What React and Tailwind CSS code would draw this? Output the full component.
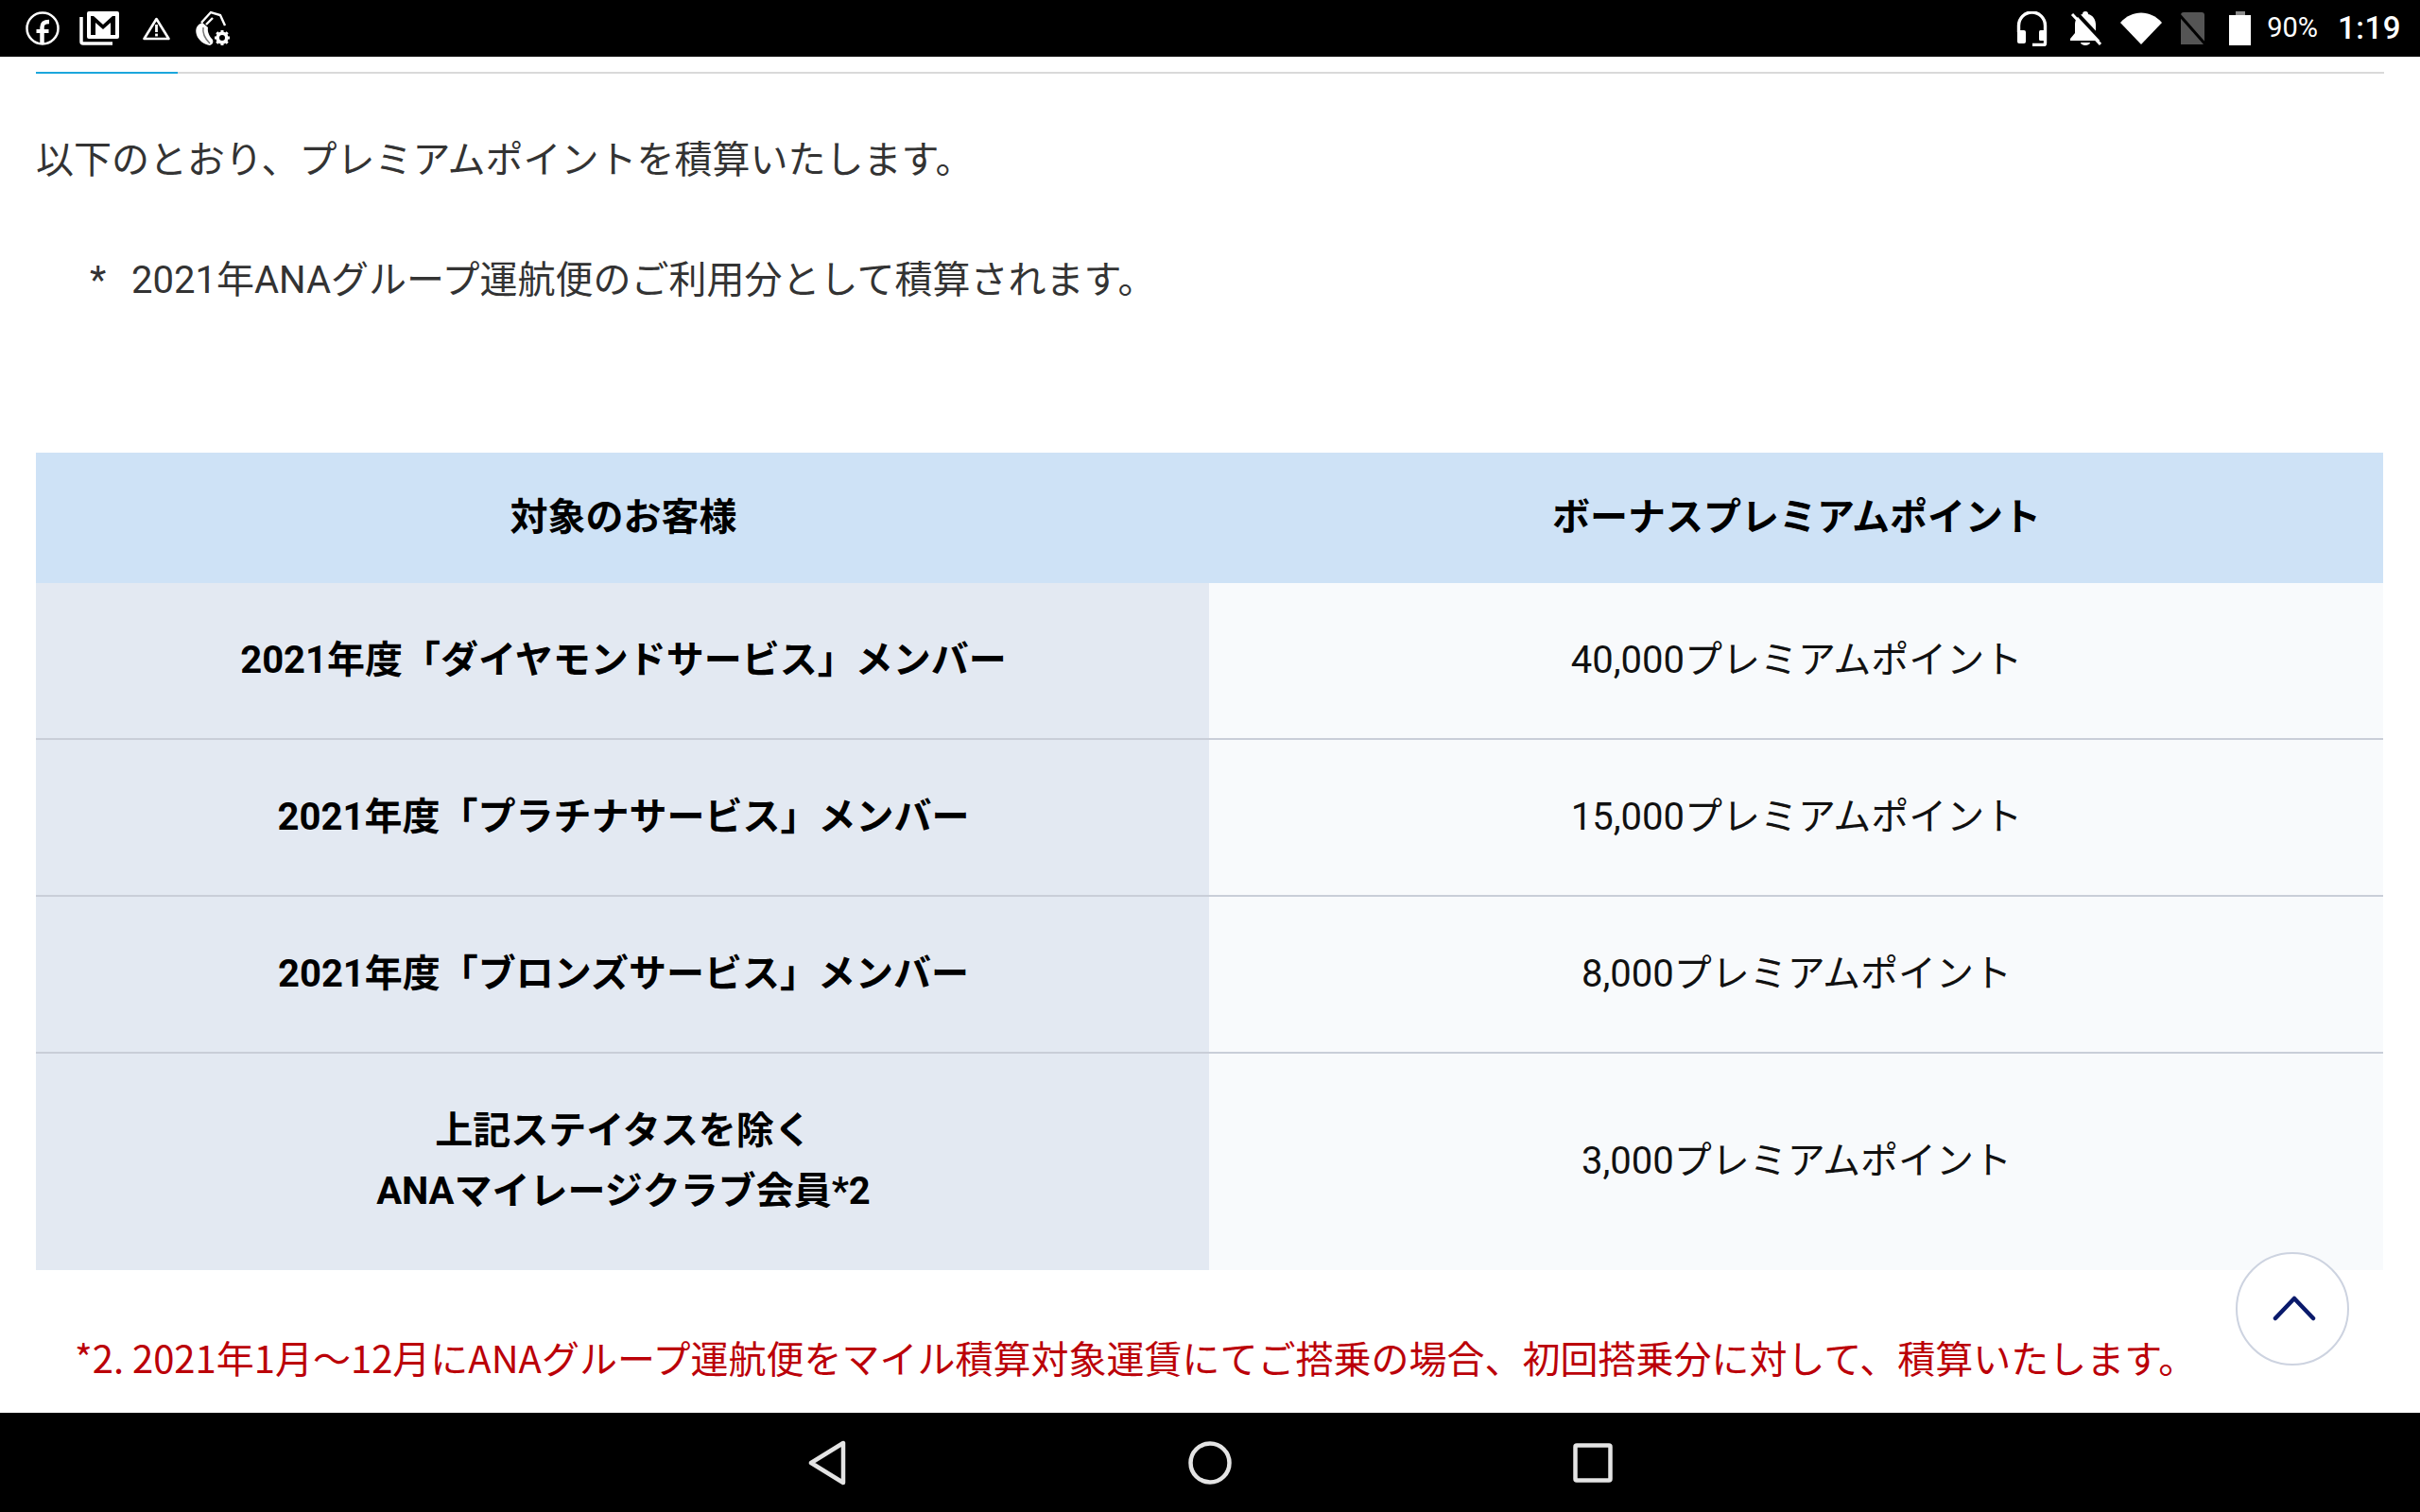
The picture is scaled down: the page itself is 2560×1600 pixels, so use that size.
const rows = [
  { name: ["2021年度「ダイヤモンドサービス」メンバー"], points: "40,000プレミアムポイント", height: "h-[166px]" },
  { name: ["2021年度「プラチナサービス」メンバー"], points: "15,000プレミアムポイント", height: "h-[166px]" },
  { name: ["2021年度「ブロンズサービス」メンバー"], points: "8,000プレミアムポイント", height: "h-[166px]" },
  { name: ["上記ステイタスを除く", "ANAマイレージクラブ会員*2"], points: "3,000プレミアムポイント", height: "h-[229px]", last: true },
];

function LeftIcons() {
  return (
    <div className="flex items-center">
      <svg width="36" height="36" viewBox="0 0 36 36" className="ml-[27px]" fill="none" stroke="white">
        <circle cx="18" cy="18" r="16.5" strokeWidth="2.5" />
        <path d="M17.500 35V17c0-4 2-6 7.500-6" strokeWidth="4.500" />
        <path d="M11.500 21h13" strokeWidth="4" />
      </svg>
      <svg width="42" height="36" viewBox="0 0 42 36" className="ml-[21px]" fill="none">
        <path d="M2 6v26a2 2 0 0 0 2 2h31" stroke="white" strokeWidth="3.500" />
        <rect x="8" y="0" width="34" height="29" rx="2" fill="white" />
        <path d="M12 25V5h3l10 9 10-9h3v20h-5V12l-8 7-8-7v13z" fill="black" />
      </svg>
      <svg width="31" height="26" viewBox="0 0 31 26" className="ml-[24px]" fill="none">
        <path d="M15.500 3 28.500 24h-26z" stroke="white" strokeWidth="2.600" strokeLinejoin="round" />
        <rect x="14.100" y="9" width="2.800" height="8" fill="white" />
        <rect x="14.100" y="18.600" width="2.800" height="2.800" fill="white" />
      </svg>
      <svg width="38" height="38" viewBox="0 0 38 38" className="ml-[25px]" fill="none">
        <path d="M7 13 17 2l10 3 5 11" stroke="white" strokeWidth="2.400" />
        <path d="M12 15 19 8" stroke="white" strokeWidth="2.400" />
        <path d="M8 13C2 15 0 20 2 26c2 6 8 10 14 11 3-1 4-3 3-6-3-3-6-8-5-13z" fill="white" />
        <path d="M9 18c-1 6 2 12 7 17" stroke="#777777" strokeWidth="1.500" />
        <circle cx="29" cy="29" r="4.800" stroke="white" strokeWidth="3.600" />
        <path d="M29 21v3M29 34v3M21 29h3M34 29h3M23.300 23.300l2 2M32.700 32.700l2 2M23.300 34.700l2-2M32.700 25.300l2-2" stroke="white" strokeWidth="3" />
      </svg>
    </div>
  );
}

function RightIcons() {
  return (
    <div className="flex items-center">
      <svg width="33" height="37" viewBox="0 0 33 37" fill="none">
        <path d="M2.500 22V15a14 14 0 0 1 28 0v19a1.500 1.500 0 0 1-1.500 1.500H17" stroke="white" strokeWidth="3.400" />
        <rect x="1" y="20" width="9" height="14" rx="2" fill="white" />
        <rect x="24" y="20" width="8" height="11" rx="1.500" fill="white" />
      </svg>
      <svg width="34" height="36" viewBox="0 0 34 36" className="ml-[23px]" fill="none">
        <path d="M17 0a3 3 0 0 1 3 3c5 1 8 6 8 11v9l5 6v2H1v-2l5-6V14c0-5 3-10 8-11a3 3 0 0 1 3-3z" fill="white" />
        <path d="M12 33h10a5 3 0 0 1-10 0z" fill="white" />
        <path d="M7 1 37 33" stroke="black" strokeWidth="4" />
        <path d="M3 3 33 35" stroke="white" strokeWidth="3" />
      </svg>
      <svg width="44" height="34" viewBox="0 0 44 34" className="ml-[20px]">
        <path d="M22 34 0 11C12-3 32-3 44 11z" fill="white" />
      </svg>
      <svg width="32" height="34" viewBox="0 0 32 34" className="ml-[16px]" fill="none">
        <path d="M4 3a3 3 0 0 1 3-3h19a3 3 0 0 1 3 3v31H4z" fill="#555555" />
        <path d="M1 1 30 34" stroke="black" strokeWidth="3" />
      </svg>
      <div className="ml-[23px] flex w-[23px] flex-col items-center">
        <div className="h-[4px] w-[10px] bg-[#8a8a8a]" />
        <div className="h-[32px] w-[23px] bg-white" />
      </div>
      <span className="ml-[17px] text-[29px] text-white">90%</span>
      <span className="ml-[21px] mr-[20px] text-[33px] font-medium tracking-[0.5px] text-white">1:19</span>
    </div>
  );
}

function BackToTop() {
  return (
    <div className="absolute left-[2365px] top-[1325px] flex h-[120px] w-[120px] items-center justify-center rounded-full border-2 border-[#cdd3e0] bg-white">
      <svg width="46" height="28" viewBox="0 0 46 28" fill="none" className="-mt-[2px] ml-[3px]">
        <path d="M3 25 23 4l20 21" stroke="#0a1a6b" strokeWidth="4.500" strokeLinecap="round" strokeLinejoin="round" />
      </svg>
    </div>
  );
}

function NavBar() {
  return (
    <div className="flex h-[105px] items-center justify-center bg-black">
      <svg width="40" height="48" viewBox="0 0 40 48" fill="none">
        <path d="M37 3v42L3 24z" stroke="#e4e4e4" strokeWidth="4.500" strokeLinejoin="round" />
      </svg>
      <svg width="46" height="46" viewBox="0 0 46 46" fill="none" className="ml-[362px]">
        <circle cx="23" cy="23" r="20.500" stroke="#e4e4e4" strokeWidth="4.500" />
      </svg>
      <svg width="42" height="42" viewBox="0 0 42 42" fill="none" className="ml-[361px]">
        <rect x="2.500" y="2.500" width="37" height="37" rx="1.500" stroke="#e4e4e4" strokeWidth="4.500" />
      </svg>
    </div>
  );
}

export default function App() {
  return (
    <div className="relative flex h-[1600px] w-[2560px] flex-col overflow-hidden bg-white font-['Roboto','Noto_Sans_CJK_JP',sans-serif] text-[40px] text-[#333333]">
      <div className="flex h-[60px] items-center justify-between bg-black">
        <LeftIcons />
        <RightIcons />
      </div>

      <div className="flex flex-1 flex-col px-[38px]">
        <div className="mt-[16px] h-[2px] w-[2484px] bg-[#d9d9d9]">
          <div className="h-[2px] w-[150px] bg-[#1ba6dc]" />
        </div>
        <p className="mt-[60px] leading-[64px]">以下のとおり、プレミアムポイントを積算いたします。</p>
        <p className="mt-[63px] flex leading-[64px]">
          <span className="ml-[57px] w-[44px]">*</span>
          <span>2021年ANAグループ運航便のご利用分として積算されます。</span>
        </p>

        <div className="mt-[150px] w-[2483px]">
          <div className="flex h-[138px] bg-[#cee2f6] pb-[1px] font-bold text-black">
            <div className="flex w-[1241px] items-center justify-center pl-[2px]">対象のお客様</div>
            <div className="flex flex-1 items-center justify-center pl-[1px]">ボーナスプレミアムポイント</div>
          </div>
          {rows.map((row) => (
            <div key={row.points} className={`flex ${row.height}`}>
              <div className={`flex w-[1241px] flex-col items-center justify-center bg-[#e3e9f2] pb-[1px] pl-[2px] font-bold text-black ${row.last ? "" : "border-b-2 border-[#c9ced8]"}`}>
                {row.name.map((line) => (
                  <span key={line} className="leading-[64px]">{line}</span>
                ))}
              </div>
              <div className={`flex flex-1 items-center justify-center bg-[#f8fafc] pb-[1px] pl-[1px] text-[#111111] ${row.last ? "" : "border-b-2 border-[#c9ced8]"}`}>
                {row.points}
              </div>
            </div>
          ))}
        </div>

        <p className="ml-[41px] mt-[60px] font-['Noto_Sans_CJK_JP',sans-serif] leading-[64px] text-[#bb0008]">
          *2. 2021年1月～12月にANAグループ運航便をマイル積算対象運賃にてご搭乗の場合、初回搭乗分に対して、積算いたします。
        </p>
      </div>

      <BackToTop />
      <NavBar />
    </div>
  );
}
